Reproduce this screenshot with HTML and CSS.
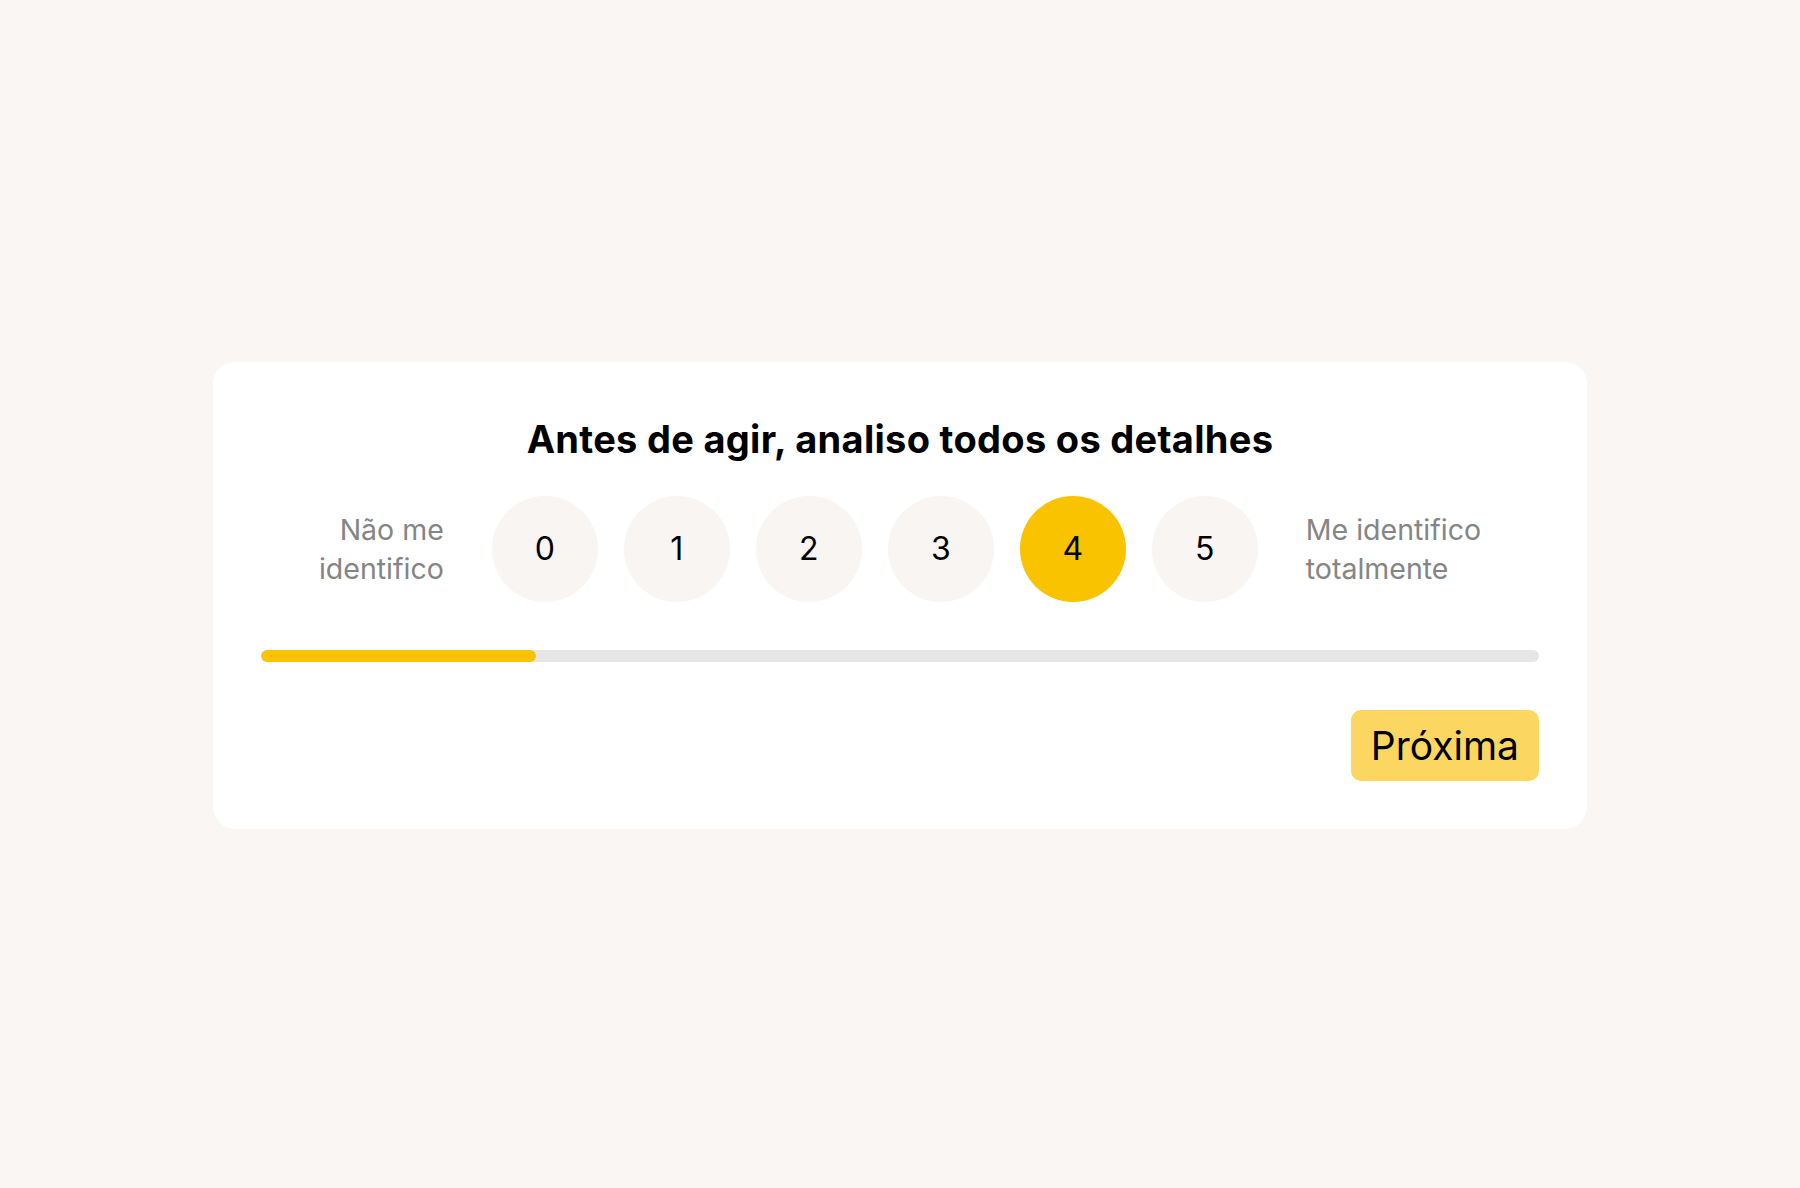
FILE: index.html
```html
<!DOCTYPE html>
<html lang="pt">
<head>
    <meta charset="UTF-8">
    <meta name="viewport" content="width=device-width, initial-scale=1.0">
    <title>Questionário</title>
    <link rel="stylesheet" href="styles.css">
</head>
<body>
    <div class="question-card">
        <h1>Antes de agir, analiso todos os detalhes</h1>

        <div class="scale-row">
            <span class="scale-label left">Não me<br>identifico</span>
            <div class="scale-options">
                <button class="option">0</button>
                <button class="option">1</button>
                <button class="option">2</button>
                <button class="option">3</button>
                <button class="option selected">4</button>
                <button class="option">5</button>
            </div>
            <span class="scale-label right">Me identifico<br>totalmente</span>
        </div>

        <div class="progress">
            <div class="progress-fill" style="width: 21.5%"></div>
        </div>

        <div class="actions">
            <button class="next-btn">Próxima</button>
        </div>
    </div>
</body>
</html>
```

FILE: styles.css
```css
* {
    margin: 0;
    padding: 0;
    box-sizing: border-box;
}
body {
    font-family: 'Inter', 'Liberation Sans', sans-serif;
    background-color: #f9f6f3;
    color: #000;
    min-height: 100vh;
    display: flex;
    align-items: center;
    justify-content: center;
}
.question-card {
    width: 1374px;
    background-color: #fff;
    border-radius: 22px;
    padding: 54px 48px 48px;
    margin-top: 2px;
}
.question-card h1 {
    font-size: 38px;
    font-weight: 700;
    letter-spacing: 0.3px;
    line-height: 46px;
    text-align: center;
    margin-bottom: 34px;
}
.scale-row {
    display: flex;
    align-items: center;
    justify-content: center;
    gap: 48px;
}
.scale-label {
    font-size: 28.5px;
    line-height: 39px;
    color: #858585;
    white-space: nowrap;
}
.scale-label.left {
    text-align: right;
}
.scale-options {
    display: flex;
    gap: 26px;
}
.option {
    width: 106px;
    height: 106px;
    border-radius: 50%;
    border: none;
    background-color: #f8f5f2;
    font-family: inherit;
    font-size: 32px;
    color: #000;
    cursor: pointer;
}
.option.selected {
    background-color: #f9c300;
}
.progress {
    height: 12px;
    margin-top: 48px;
    background-color: #e6e6e6;
    border-radius: 6px;
    overflow: hidden;
}
.progress-fill {
    height: 100%;
    background-color: #f9c300;
    border-radius: 6px;
}
.actions {
    display: flex;
    justify-content: flex-end;
    margin-top: 48px;
}
.next-btn {
    height: 71px;
    padding: 0 20px;
    background-color: #fbd761;
    border: none;
    border-radius: 10px;
    font-family: inherit;
    font-size: 39px;
    color: #000;
    cursor: pointer;
}
```
